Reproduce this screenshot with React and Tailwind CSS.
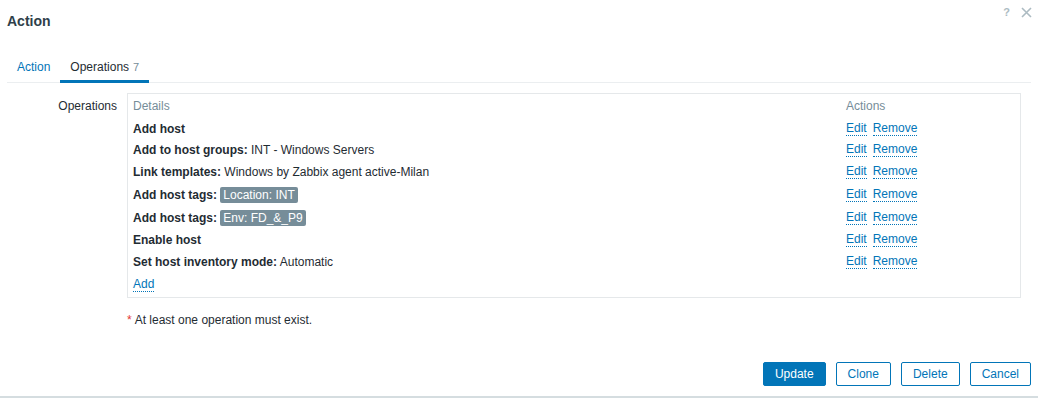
import React from "react";

const tag = "inline-block bg-[#768d99] text-white rounded-[2px] px-[3px] leading-[16px]";

const rows = [
  { h: "h-[21px]", content: <b>Add host</b> },
  { h: "h-[22px]", content: <><b>Add to host groups:</b> INT - Windows Servers</> },
  { h: "h-[22px]", content: <><b>Link templates:</b> Windows by Zabbix agent active-Milan</> },
  { h: "h-[23px]", content: <><b>Add host tags:</b> <span className={tag}>Location: INT</span></> },
  { h: "h-[23px]", content: <><b>Add host tags:</b> <span className={tag}>Env: FD_&amp;_P9</span></> },
  { h: "h-[22px]", content: <b>Enable host</b> },
  { h: "h-[22px]", content: <><b>Set host inventory mode:</b> Automatic</> },
];

function Link({ children }) {
  return (
    <span className="text-[#0275b8] border-b border-dotted border-[#0275b8] leading-[13px] cursor-pointer">
      {children}
    </span>
  );
}

export default function App() {
  return (
    <div
      className="w-[1038px] h-[398px] bg-white flex flex-col text-[12px] text-[#1f2c33]"
      style={{ fontFamily: '"Liberation Sans", Arial, sans-serif' }}
    >
      <div className="flex justify-between h-[42px]">
        <div className="flex items-center pl-[7px] text-[14px] font-bold text-[#2f3f4a]">Action</div>
        <div className="flex items-start pt-[6px] pr-[6px] gap-[11px]">
          <span className="text-[11px] font-bold text-[#acbbc2] leading-[14px] mt-[-1px]">?</span>
          <svg width="11" height="11" viewBox="0 0 11 11" className="mt-[1px]">
            <path d="M1 1L10 10M10 1L1 10" stroke="#acbbc2" strokeWidth="1.6" />
          </svg>
        </div>
      </div>

      <div className="mt-[12px] mx-[7px] flex border-b border-[#ebeef0]">
        <div className="h-[29px] -mb-px px-[10px] flex items-center border-b-[3px] border-transparent text-[#0275b8]">
          Action
        </div>
        <div className="h-[29px] -mb-px px-[10px] flex items-center border-b-[3px] border-[#0275b8]">
          Operations<span className="ml-[4px] text-[#768d99] text-[11px]">7</span>
        </div>
      </div>

      <div className="flex mt-[10px]">
        <div className="w-[117px] text-right pt-[6px] leading-[14px]">Operations</div>
        <div className="ml-[10px] w-[894px] border border-[#e5e8ea] px-[5px] pb-[1px]">
          <div className="flex h-[24px] items-center text-[#768d99]">
            <div className="w-[713px]">Details</div>
            <div>Actions</div>
          </div>
          {rows.map((r, i) => (
            <div key={i} className={`flex items-center ${r.h}`}>
              <div className="w-[713px] whitespace-nowrap">{r.content}</div>
              <div className="flex gap-[6px]">
                <Link>Edit</Link>
                <Link>Remove</Link>
              </div>
            </div>
          ))}
          <div className="flex items-center h-[23px] pt-[1px]">
            <Link>Add</Link>
          </div>
        </div>
      </div>

      <div className="ml-[127px] mt-[15px] leading-[14px]">
        <span className="text-[#e33734] mr-[3px]">*</span>At least one operation must exist.
      </div>

      <div className="flex justify-end gap-[10px] pr-[7px] mt-[35px]">
        <button className="h-[24px] px-[11px] bg-[#0275b8] border border-[#0275b8] text-white rounded-[2px]">Update</button>
        <button className="h-[24px] px-[11px] bg-white border border-[#0275b8] text-[#0275b8] rounded-[2px]">Clone</button>
        <button className="h-[24px] px-[11px] bg-white border border-[#0275b8] text-[#0275b8] rounded-[2px]">Delete</button>
        <button className="h-[24px] px-[11px] bg-white border border-[#0275b8] text-[#0275b8] rounded-[2px]">Cancel</button>
      </div>

      <div className="mt-auto h-[2px] bg-[#d5dde0]" />
    </div>
  );
}
